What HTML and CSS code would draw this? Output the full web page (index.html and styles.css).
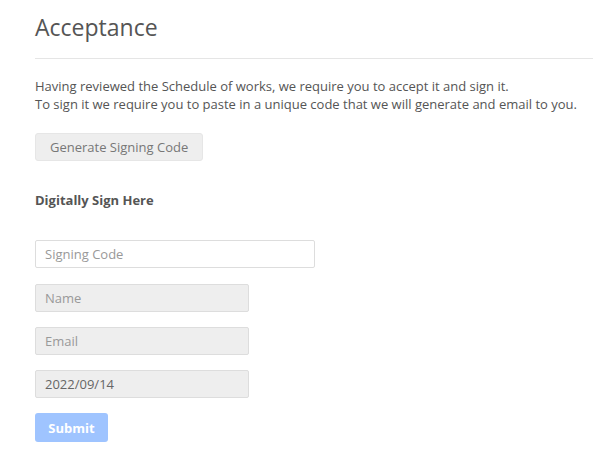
FILE: index.html
```html
<!DOCTYPE html>
<html>
<head>
<meta charset="utf-8">
<link rel="stylesheet" href="styles.css">
</head>
<body>
<div class="page">
  <h1 class="title">Acceptance</h1>
  <hr class="rule">
  <p class="intro">Having reviewed the Schedule of works, we require you to accept it and sign it.<br>To sign it we require you to paste in a unique code that we will generate and email to you.</p>
  <button class="btn-gen" type="button">Generate Signing Code</button>
  <h4 class="sign-title">Digitally Sign Here</h4>
  <form class="form">
    <input class="field field-code" type="text" placeholder="Signing Code">
    <input class="field field-disabled" type="text" placeholder="Name" disabled>
    <input class="field field-disabled" type="text" placeholder="Email" disabled>
    <input class="field field-disabled field-date" type="text" value="2022/09/14" disabled>
    <button class="btn-submit" type="button" disabled>Submit</button>
  </form>
</div>
</body>
</html>
```

FILE: styles.css
```css
html, body {
  margin: 0;
  padding: 0;
  background: #fff;
}
body {
  font-family: "Open Sans", "Liberation Sans", sans-serif;
  color: #555;
}
.page {
  padding: 0 0 0 35px;
}
.title {
  margin: 0;
  padding-top: 12px;
  font-size: 23px;
  font-weight: 400;
  line-height: 31px;
  color: #555;
}
.rule {
  margin: 15px 0 0 0;
  border: 0;
  border-top: 1px solid #e5e5e5;
  height: 0;
}
.intro {
  margin: 18px 0 0 0;
  font-size: 13px;
  line-height: 18px;
  color: #555;
}
.btn-gen {
  display: block;
  margin-top: 20px;
  height: 28px;
  padding: 0 14px;
  font-family: inherit;
  font-size: 13px;
  color: #777;
  background: #eee;
  border: 1px solid #e6e6e6;
  border-radius: 3px;
}
.sign-title {
  margin: 30px 0 0 0;
  font-size: 13px;
  line-height: 18px;
  font-weight: 700;
  color: #555;
}
.form {
  margin-top: 31px;
  display: flex;
  flex-direction: column;
  align-items: flex-start;
  gap: 15px;
}
.field {
  box-sizing: border-box;
  height: 28px;
  margin: 0;
  padding: 0 9px;
  font-family: inherit;
  font-size: 13px;
  color: #666;
  border: 1px solid #ddd;
  border-radius: 2px;
  outline: none;
}
.field::placeholder {
  color: #999;
}
.field-code {
  width: 280px;
  background: #fff;
  margin-bottom: 1px;
}
.field-disabled {
  width: 214px;
  background: #eee;
}
.field-date {
  color: #666;
}
.btn-submit {
  box-sizing: border-box;
  height: 29px;
  width: 73px;
  padding: 0;
  font-family: inherit;
  font-size: 13px;
  font-weight: 700;
  color: #fff;
  background: #9fc4ff;
  border: 0;
  border-radius: 3px;
}
```
